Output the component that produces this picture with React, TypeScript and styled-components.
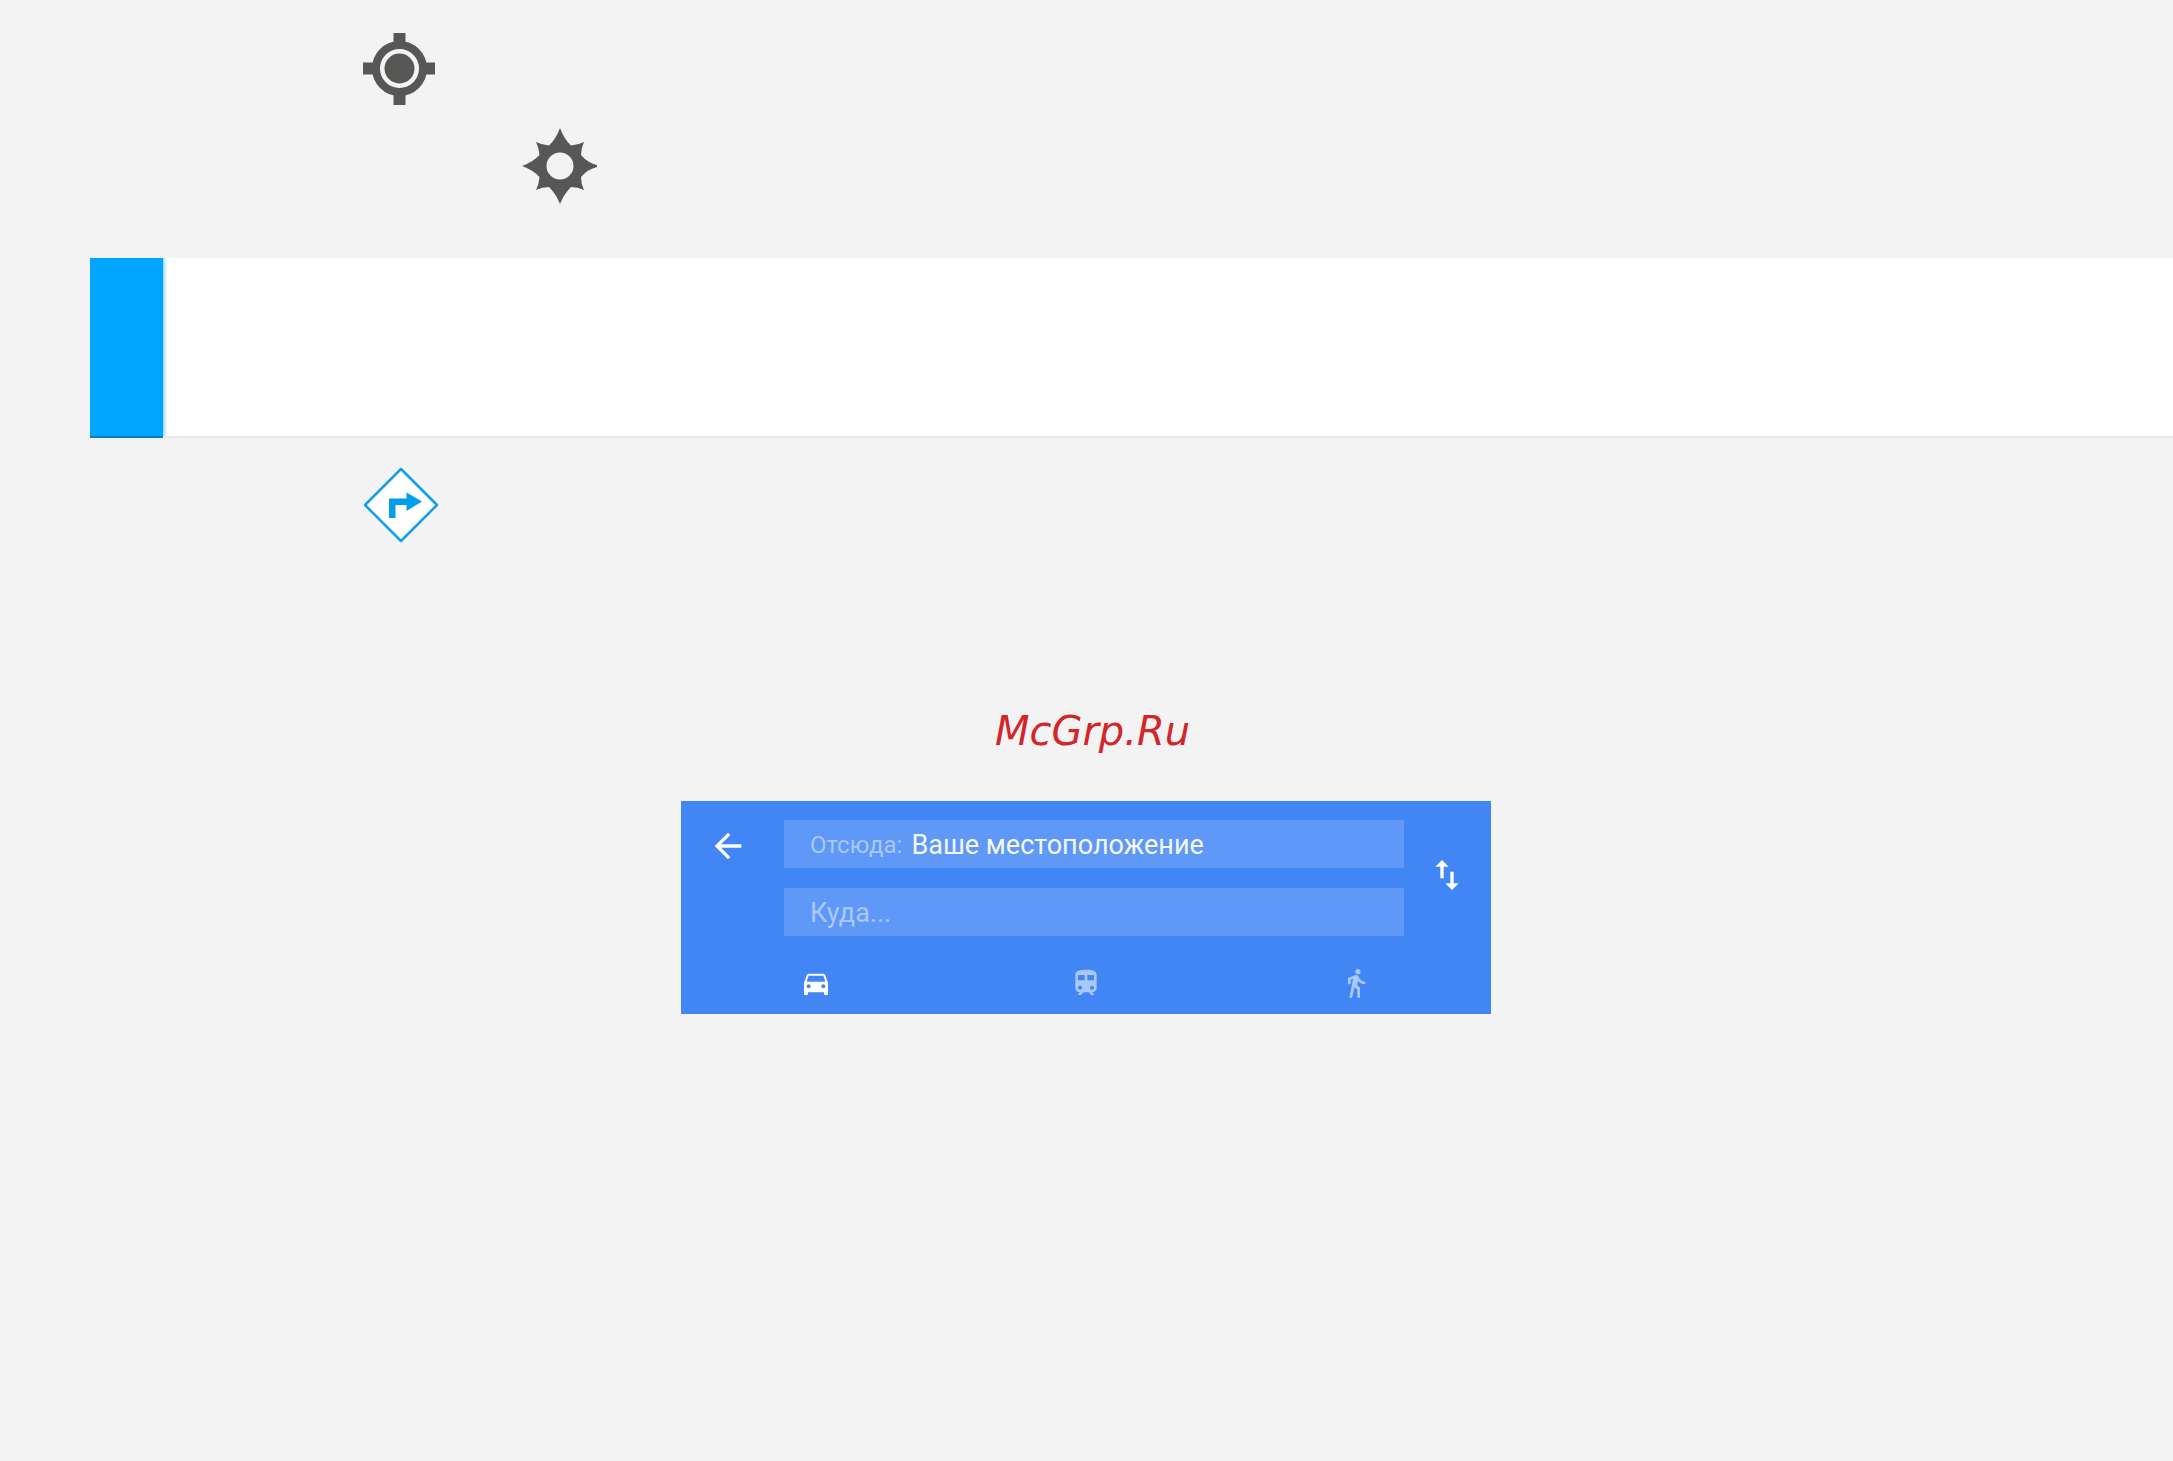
import React, { useState } from "react";
import styled, { createGlobalStyle } from "styled-components";
import { MdArrowBack, MdSwapVert, MdDirectionsCar, MdDirectionsWalk } from "react-icons/md";

const GlobalStyle = createGlobalStyle`
  *, *::before, *::after { box-sizing: border-box; }
  body {
    margin: 0;
    background: #f3f3f3;
    font-family: Roboto, "Noto Sans", sans-serif;
  }
`;

const Page = styled.main`
  display: flex;
  flex-direction: column;
  padding: 32px 0 0 90px;
`;

const IconLine = styled.div<{ $indent: number; $gap: number }>`
  display: flex;
  padding-left: ${(p) => p.$indent}px;
  margin-bottom: ${(p) => p.$gap}px;
`;

const Symbol = styled.svg`
  display: block;
  width: 76px;
  height: 76px;
`;

const Banner = styled.section`
  height: 180px;
  margin-bottom: 29px;
  display: flex;
  background: #ffffff;
  border-bottom: 2px solid #e8e8e8;
`;

const BannerMark = styled.div`
  width: 73px;
  margin-bottom: -2px;
  background: #00a5ff;
  border-bottom: 2px solid #0080c6;
`;

const BannerEdge = styled.div`
  width: 5px;
  background: linear-gradient(to right, #8fd6ff, #d5f0ff 40%, #ffffff);
`;

const Watermark = styled.p`
  margin: 0 78px 46px 0;
  text-align: center;
  color: #d3262b;
  font: italic 40px/48px "DejaVu Sans", sans-serif;
`;

const Planner = styled.form`
  align-self: center;
  width: 810px;
  max-width: 100%;
  margin-right: 91px;
  padding: 19px 0 15px 27px;
  background: #4285f4;
  display: grid;
  grid-template-columns: 76px minmax(0, 1fr) 87px;
`;

const IconButton = styled.button<{ $size: number }>`
  display: flex;
  padding: 0;
  border: 0;
  background: none;
  color: #ffffff;
  font-size: ${(p) => p.$size}px;
  cursor: pointer;
`;

const BackCell = styled.div`
  padding-top: 6px;
`;

const SwapCell = styled.div`
  padding: 35px 0 0 23px;
`;

const Fields = styled.div`
  display: flex;
  flex-direction: column;
  gap: 20px;
`;

const Field = styled.label`
  display: flex;
  align-items: center;
  gap: 9px;
  height: 48px;
  padding: 2px 26px 0;
  background: #6098f7;
`;

const FieldName = styled.span`
  color: #a9c8fb;
  font-size: 24px;
  line-height: 32px;
`;

const FieldInput = styled.input`
  flex: 1;
  min-width: 0;
  padding: 0;
  border: 0;
  outline: 0;
  background: none;
  color: #f4f9ff;
  font: 27px/32px Roboto, "Noto Sans", sans-serif;
  &::placeholder { color: #a9c8fb; opacity: 1; }
`;

const Modes = styled.div`
  grid-column: 2;
  display: flex;
  justify-content: space-between;
  padding: 31px 32px 0 16px;
`;

const ModeButton = styled(IconButton)<{ $active: boolean }>`
  color: ${(p) => (p.$active ? "#ffffff" : "#a9c8fb")};
`;

function TrainIcon() {
  return (
    <svg viewBox="0 0 24 24" width="1em" height="1em" fill="currentColor" aria-hidden="true">
      <path d="M12 2c-4 0-8 .5-8 4v9.5C4 17.43 5.57 19 7.5 19L6 20.5v.5h2.23l2-2H14l2 2h2v-.5L16.5 19c1.93 0 3.5-1.57 3.5-3.5V6c0-3.5-3.58-4-8-4zM7.5 17c-.83 0-1.5-.67-1.5-1.5S6.67 14 7.5 14s1.5.67 1.5 1.5S8.33 17 7.5 17zm3.5-7H6V6h5v4zm2 0V6h5v4h-5zm3.5 7c-.83 0-1.5-.67-1.5-1.5s.67-1.5 1.5-1.5 1.5.67 1.5 1.5-.67 1.5-1.5 1.5z" />
    </svg>
  );
}

const modes = [
  { id: "car", label: "На машине", icon: <MdDirectionsCar /> },
  { id: "transit", label: "На транспорте", icon: <TrainIcon /> },
  { id: "walk", label: "Пешком", icon: <MdDirectionsWalk /> },
];

function RoutePlanner() {
  const [from, setFrom] = useState("Ваше местоположение");
  const [to, setTo] = useState("");
  const [mode, setMode] = useState("car");
  const swap = () => {
    setFrom(to);
    setTo(from);
  };
  return (
    <Planner onSubmit={(e) => e.preventDefault()}>
      <BackCell>
        <IconButton type="button" $size={40} aria-label="Назад"><MdArrowBack /></IconButton>
      </BackCell>
      <Fields>
        <Field>
          <FieldName>Отсюда:</FieldName>
          <FieldInput value={from} onChange={(e) => setFrom(e.target.value)} />
        </Field>
        <Field>
          <FieldInput aria-label="Куда" placeholder="Куда..." value={to} onChange={(e) => setTo(e.target.value)} />
        </Field>
      </Fields>
      <SwapCell>
        <IconButton type="button" $size={40} aria-label="Поменять местами" onClick={swap}><MdSwapVert /></IconButton>
      </SwapCell>
      <Modes>
        {modes.map((m) => (
          <ModeButton key={m.id} type="button" $size={32} $active={mode === m.id} aria-label={m.label} onClick={() => setMode(m.id)}>
            {m.icon}
          </ModeButton>
        ))}
      </Modes>
    </Planner>
  );
}

export default function App() {
  return (
    <>
      <GlobalStyle />
      <Page>
        <IconLine $indent={272} $gap={20}>
          <Symbol viewBox="0 0 76 76" aria-hidden="true">
            <path d="M31.5 1h12v12h-12zM31.5 61h12v12h-12zM1 30.5h12v12H1zM61 30.5h12v12H61z" fill="#585755" />
            <circle cx="37.5" cy="36.5" r="23.5" fill="none" stroke="#585755" strokeWidth="8" />
            <circle cx="37.5" cy="36.5" r="15" fill="#585755" />
          </Symbol>
        </IconLine>
        <IconLine $indent={432} $gap={54}>
          <Symbol viewBox="0 0 76 76" aria-hidden="true">
            <path
              fillRule="evenodd"
              fill="#585755"
              d="M38 0Q42 11 49 17.5Q56 17 62 14Q59 20 59 27Q66 35 75 37V39Q66 41 59 49Q59 56 62 62Q56 59 49 59Q42 66 38 76Q34 66 27 59Q20 59 14 62Q17 56 17.5 49Q11 42 0 38Q11 34 17.5 27Q17 20 14 14Q20 17 27 17.5Q34 11 38 0ZM38 24.5a13.5 13.5 0 1 0 0 27a13.5 13.5 0 1 0 0-27Z"
            />
          </Symbol>
        </IconLine>
        <Banner>
          <BannerMark />
          <BannerEdge />
        </Banner>
        <IconLine $indent={273} $gap={164}>
          <Symbol viewBox="0 0 76 76" aria-hidden="true">
            <path d="M38 2L74 38L38 74L2 38Z" fill="#ffffff" stroke="#12a0e8" strokeWidth="2.5" strokeLinejoin="round" />
            <path d="M26 51V31.5H43.5V25.5L59 34.5L43.5 44V38H32.5V51Z" fill="#009feb" />
          </Symbol>
        </IconLine>
        <Watermark>McGrp.Ru</Watermark>
        <RoutePlanner />
      </Page>
    </>
  );
}
